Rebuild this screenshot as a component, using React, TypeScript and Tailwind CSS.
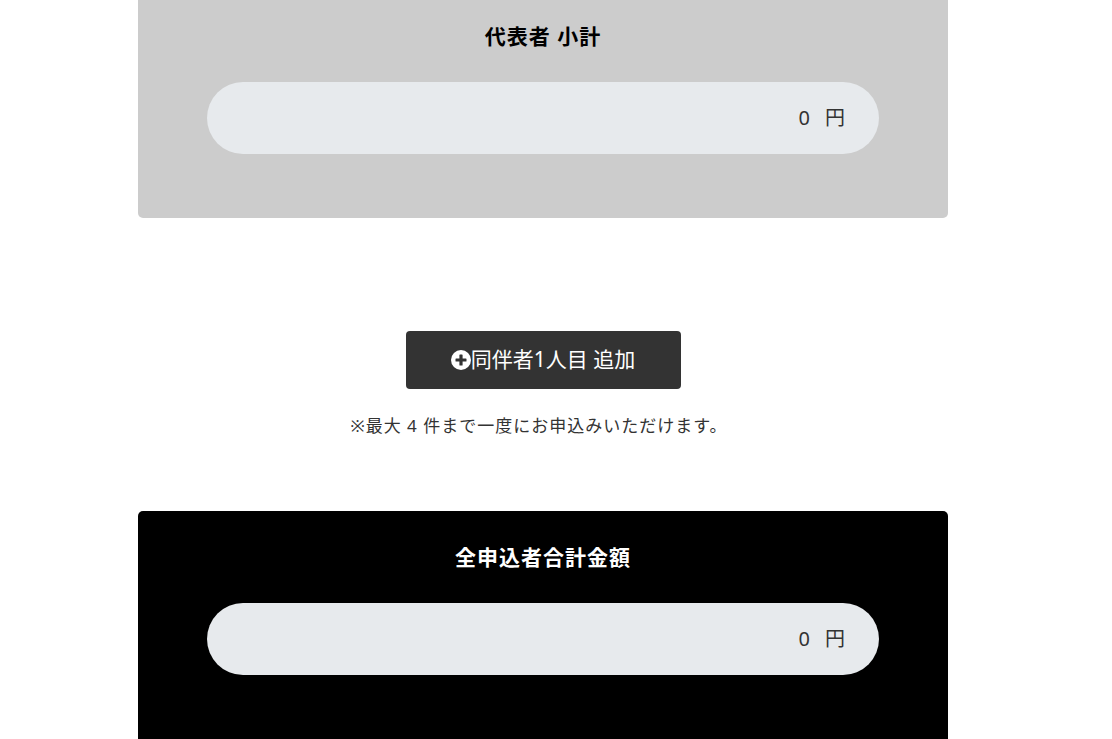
import React from 'react';

const font = { fontFamily: '"Noto Sans", "Noto Sans CJK JP", sans-serif' };

const PlusCircle: React.FC = () => (
  <svg width="20" height="20" viewBox="0 0 20 20" className="shrink-0">
    <circle cx="10" cy="10" r="10" fill="#ffffff" />
    <rect x="8.4" y="4.5" width="3.2" height="11" rx="0.6" fill="#333333" />
    <rect x="4.5" y="8.4" width="11" height="3.2" rx="0.6" fill="#333333" />
  </svg>
);

const TotalBox: React.FC<{ title: string; dark?: boolean; top: string }> = ({ title, dark, top }) => (
  <div
    className={`w-full px-[69px] ${top} ${dark ? 'bg-black text-white rounded-t-[5px] pb-[70px]' : 'bg-[#cccccc] text-black rounded-b-[5px] pb-[64px]'}`}
  >
    <h3 className="text-center text-[21px] tracking-[1px] font-bold leading-[30px]">{title}</h3>
    <div className="mt-[31px] h-[72px] rounded-full bg-[#e7eaed] flex items-center justify-end pr-[34px] text-[20px] text-[#333333]">
      <span>0</span>
      <span className="ml-[15px]">円</span>
    </div>
  </div>
);

export default function App() {
  return (
    <div className="min-h-screen bg-white overflow-hidden" style={font}>
      <div className="ml-[138px] w-[810px] flex flex-col items-center">
        <TotalBox title="代表者 小計" top="pt-[21px]" />

        <button
          type="button"
          className="mt-[113px] w-[275px] h-[58px] bg-[#333333] rounded-[4px] text-white text-[21px] flex items-center justify-center"
        >
          <PlusCircle />
          <span>同伴者1人目 追加</span>
        </button>
        <p className="mt-[25px] text-[17px] tracking-[1px] leading-[24px] text-[#333333] -ml-[8px]">
          ※最大 4 件まで一度にお申込みいただけます。
        </p>

        <div className="mt-[73px] w-full">
          <TotalBox title="全申込者合計金額" dark top="pt-[31px]" />
        </div>
      </div>
    </div>
  );
}
